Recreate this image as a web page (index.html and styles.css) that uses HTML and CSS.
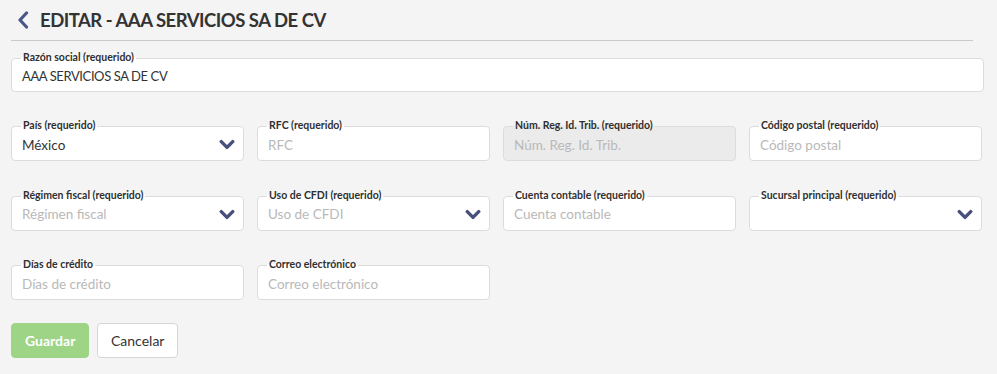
FILE: index.html
```html
<!DOCTYPE html>
<html lang="es">
<head>
<meta charset="utf-8">
<title>Editar</title>
<link rel="stylesheet" href="styles.css">
</head>
<body>
<div class="page">
  <header class="head">
    <svg class="back" width="12" height="18" viewBox="0 0 12 18"><polyline points="9.5,2 3,9 9.5,16" fill="none" stroke="#4a5688" stroke-width="3.2" stroke-linecap="round" stroke-linejoin="round"/></svg>
    <h1 class="title">EDITAR - AAA SERVICIOS SA DE CV</h1>
  </header>
  <div class="rule"></div>

  <form class="form">
    <div class="field full">
      <label class="lbl">Razón social (requerido)</label>
      <div class="box"><span class="val up">AAA SERVICIOS SA DE CV</span></div>
    </div>

    <div class="grid">
      <div class="field">
        <label class="lbl">País (requerido)</label>
        <div class="box"><span class="val">México</span><svg class="chev" viewBox="0 0 14 9"><polyline points="2,2 7,7 12,2"/></svg></div>
      </div>
      <div class="field">
        <label class="lbl">RFC (requerido)</label>
        <div class="box"><span class="ph">RFC</span></div>
      </div>
      <div class="field">
        <label class="lbl dis">Núm. Reg. Id. Trib. (requerido)</label>
        <div class="box disabled"><span class="ph">Núm. Reg. Id. Trib.</span></div>
      </div>
      <div class="field">
        <label class="lbl">Código postal (requerido)</label>
        <div class="box"><span class="ph">Código postal</span></div>
      </div>

      <div class="field">
        <label class="lbl">Régimen fiscal (requerido)</label>
        <div class="box"><span class="ph">Régimen fiscal</span><svg class="chev" viewBox="0 0 14 9"><polyline points="2,2 7,7 12,2"/></svg></div>
      </div>
      <div class="field">
        <label class="lbl">Uso de CFDI (requerido)</label>
        <div class="box"><span class="ph">Uso de CFDI</span><svg class="chev" viewBox="0 0 14 9"><polyline points="2,2 7,7 12,2"/></svg></div>
      </div>
      <div class="field">
        <label class="lbl">Cuenta contable (requerido)</label>
        <div class="box"><span class="ph">Cuenta contable</span></div>
      </div>
      <div class="field">
        <label class="lbl">Sucursal principal (requerido)</label>
        <div class="box"><span class="ph"></span><svg class="chev" viewBox="0 0 14 9"><polyline points="2,2 7,7 12,2"/></svg></div>
      </div>

      <div class="field">
        <label class="lbl">Días de crédito</label>
        <div class="box"><span class="ph">Días de crédito</span></div>
      </div>
      <div class="field">
        <label class="lbl">Correo electrónico</label>
        <div class="box"><span class="ph">Correo electrónico</span></div>
      </div>
    </div>

    <div class="actions">
      <button type="button" class="btn save">Guardar</button>
      <button type="button" class="btn cancel">Cancelar</button>
    </div>
  </form>
</div>
</body>
</html>
```
FILE: styles.css
```css
html, body {
  margin: 0;
  padding: 0;
  background: #f4f4f4;
}
body {
  font-family: "Lato", "Open Sans", sans-serif;
  color: #333;
}
.page {
  padding: 0 13px 0 11px;
}
.head {
  display: flex;
  align-items: center;
  height: 40px;
  padding-left: 6px;
  gap: 11px;
}
.back {
  display: block;
  margin-top: -1px;
}
.title {
  margin: 0;
  font-size: 18.5px;
  font-weight: 700;
  color: #333;
  letter-spacing: -0.5px;
}
.rule {
  height: 1px;
  background: #c9c9c9;
  margin-right: 11px;
}
.form {
  padding-top: 17px;
}
.field {
  position: relative;
}
.box {
  height: 34px;
  box-sizing: border-box;
  background: #fff;
  border: 1px solid #dcdcdc;
  border-radius: 4px;
  display: flex;
  align-items: center;
  justify-content: space-between;
  padding: 2px 8px 0 10px;
  font-size: 13.5px;
}
.box.disabled {
  background: #ebebeb;
}
.val {
  color: #333;
}
.val.up {
  letter-spacing: -0.4px;
  font-size: 13px;
}
.ph {
  color: #b9b9b9;
}
.lbl {
  position: absolute;
  top: -7px;
  left: 10px;
  padding: 0 2px;
  font-size: 10.5px;
  font-weight: 700;
  line-height: 12px;
  color: #2f2f2f;
  background: linear-gradient(to bottom, #f4f4f4 50%, #fff 50%);
}
.lbl.dis {
  background: linear-gradient(to bottom, #f4f4f4 50%, #ebebeb 50%);
}
.chev {
  width: 16px;
  height: 11px;
  fill: none;
  stroke: #47507c;
  stroke-width: 3;
  stroke-linecap: round;
  stroke-linejoin: round;
}
.grid {
  margin-top: 34px;
  display: grid;
  grid-template-columns: repeat(4, 233px);
  column-gap: 13px;
  row-gap: 34.5px;
}
.grid .box {
  height: 35px;
}
.actions {
  margin-top: 23px;
  display: flex;
  gap: 8px;
}
.btn {
  height: 35px;
  border-radius: 4px;
  font-family: "Lato", "Open Sans", sans-serif;
  font-size: 14px;
  padding: 0 13px;
  cursor: pointer;
}
.save {
  background: #9dd486;
  border: 1px solid #9dd486;
  color: #fff;
  font-weight: 700;
  width: 78px;
}
.cancel {
  background: #fff;
  border: 1px solid #d6d6d6;
  color: #333;
  width: 81px;
}
```
